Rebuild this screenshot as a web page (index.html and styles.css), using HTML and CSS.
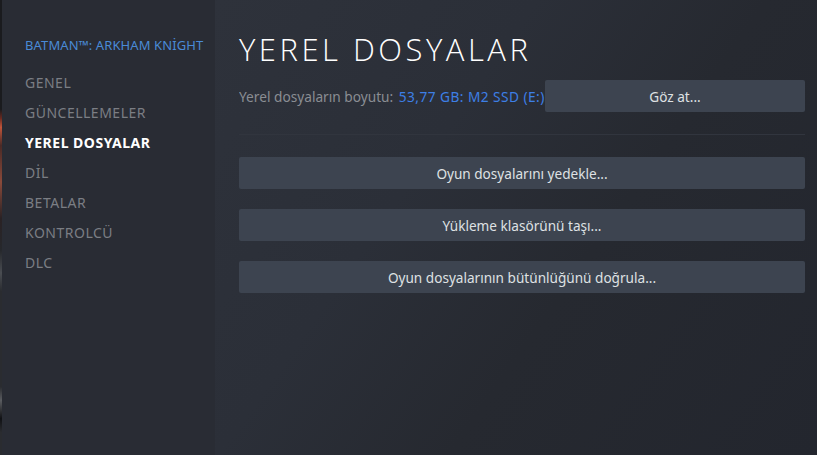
FILE: index.html
```html
<!DOCTYPE html>
<html lang="tr">
<head>
<meta charset="utf-8">
<title>Yerel Dosyalar</title>
<link rel="stylesheet" href="styles.css">
</head>
<body>
<div class="app">
  <div class="edge"></div>
  <nav class="sidebar">
    <div class="game-title">BATMAN™: ARKHAM KNİGHT</div>
    <ul class="menu">
      <li class="menu-item">GENEL</li>
      <li class="menu-item">GÜNCELLEMELER</li>
      <li class="menu-item active">YEREL DOSYALAR</li>
      <li class="menu-item">DİL</li>
      <li class="menu-item">BETALAR</li>
      <li class="menu-item">KONTROLCÜ</li>
      <li class="menu-item">DLC</li>
    </ul>
  </nav>
  <main class="content">
    <h1 class="page-title">YEREL DOSYALAR</h1>
    <div class="size-row">
      <div class="size-text"><span class="size-label">Yerel dosyaların boyutu:</span> <span class="size-value">53,77 GB: M2 SSD (E:)</span></div>
      <button class="btn btn-browse">Göz at...</button>
    </div>
    <hr class="divider">
    <div class="actions">
      <button class="btn">Oyun dosyalarını yedekle...</button>
      <button class="btn">Yükleme klasörünü taşı...</button>
      <button class="btn">Oyun dosyalarının bütünlüğünü doğrula...</button>
    </div>
  </main>
</div>
</body>
</html>
```

FILE: styles.css
```css
html, body {
  margin: 0;
  padding: 0;
  height: 100%;
  background: #24272f;
  font-family: "Noto Sans", "Open Sans", sans-serif;
}

.app {
  display: flex;
  height: 455px;
  width: 817px;
  overflow: hidden;
}

.edge {
  width: 2px;
  flex: none;
  background: linear-gradient(to bottom, #1a1b1e 0%, #1a1b1e 24%, #6a2a20 26%, #c0553a 28%, #4a2a26 32%, #8a4a3a 40%, #2a2224 48%, #26282c 55%, #4a4d52 60%, #2a2c30 64%, #2a2c30 85%, #5a5c60 88%, #101114 92%, #2a2c30 95%);
}

.sidebar {
  width: 213px;
  flex: none;
  background: #292c34;
  padding: 37px 0 0 23px;
  box-sizing: border-box;
}

.game-title {
  color: #4a8ad6;
  font-size: 13px;
  letter-spacing: 0.1px;
  line-height: 17px;
  white-space: nowrap;
}

.menu {
  list-style: none;
  margin: 14px 0 0;
  padding: 0;
}

.menu-item {
  color: #7b7e84;
  font-size: 14px;
  letter-spacing: 0.5px;
  line-height: 30px;
  height: 30px;
}

.menu-item.active {
  color: #ffffff;
  font-weight: 700;
  letter-spacing: 0.5px;
}

.content {
  flex: 1;
  padding: 27px 12px 0 24px;
  background: linear-gradient(125deg, #2e323b 0%, #2b2f38 35%, #262930 60%, #23262e 100%);
}

.page-title {
  margin: 0;
  color: #ffffff;
  font-family: "Open Sans", "Noto Sans", sans-serif;
  font-weight: 300;
  font-size: 31px;
  letter-spacing: 3.5px;
  line-height: 44px;
}

.size-row {
  display: flex;
  align-items: center;
  margin-top: 9px;
}

.size-text {
  flex: none;
  width: 306px;
  font-size: 13.7px;
  white-space: nowrap;
  overflow: hidden;
}

.size-label {
  color: #8a8d93;
}

.size-value {
  color: #3d7fe6;
  letter-spacing: 0.45px;
  margin-left: 2px;
}

.btn {
  display: block;
  width: 100%;
  height: 32px;
  border: none;
  border-radius: 2px;
  background: #3d4450;
  color: #dfe1e3;
  font-family: "Noto Sans", "Open Sans", sans-serif;
  font-size: 13.6px;
  padding: 0;
  cursor: pointer;
}

.btn-browse {
  flex: 1;
  width: auto;
}

.divider {
  border: none;
  height: 1px;
  background: #31353e;
  margin: 22px 0 22px;
}

.actions {
  display: flex;
  flex-direction: column;
  gap: 20px;
}
```
